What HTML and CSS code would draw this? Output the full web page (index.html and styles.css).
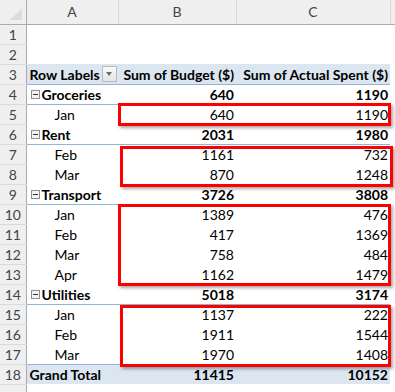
FILE: index.html
```html
<!DOCTYPE html>
<html lang="en">
<head>
<meta charset="UTF-8">
<title>Pivot</title>
<link rel="stylesheet" href="styles.css">
</head>
<body>
<div class="sheet">
  <table class="grid">
    <colgroup>
      <col class="c-hd"><col class="c-a"><col class="c-b"><col class="c-c"><col class="c-d">
    </colgroup>
    <tr class="colhead">
      <th class="corner"><span class="tri"></span></th><th>A</th><th>B</th><th>C</th><th></th>
    </tr>
    <tr><th>1</th><td></td><td></td><td></td><td></td></tr>
    <tr><th>2</th><td></td><td></td><td></td><td></td></tr>
    <tr class="pv-head">
      <th>3</th>
      <td><span class="lbl">Row Labels</span><span class="filter"></span></td>
      <td class="num">Sum of Budget ($)</td>
      <td class="num">Sum of Actual Spent ($)</td><td class="blank"></td>
    </tr>
    <tr class="grp"><th>4</th><td><span class="minus"></span>Groceries</td><td class="num">640</td><td class="num">1190</td><td class="blank"></td></tr>
    <tr class="item"><th>5</th><td class="sub">Jan</td><td class="num">640</td><td class="num">1190</td><td></td></tr>
    <tr class="grp"><th>6</th><td><span class="minus"></span>Rent</td><td class="num">2031</td><td class="num">1980</td><td class="blank"></td></tr>
    <tr class="item"><th>7</th><td class="sub">Feb</td><td class="num">1161</td><td class="num">732</td><td></td></tr>
    <tr class="item"><th>8</th><td class="sub">Mar</td><td class="num">870</td><td class="num">1248</td><td></td></tr>
    <tr class="grp"><th>9</th><td><span class="minus"></span>Transport</td><td class="num">3726</td><td class="num">3808</td><td class="blank"></td></tr>
    <tr class="item"><th>10</th><td class="sub">Jan</td><td class="num">1389</td><td class="num">476</td><td></td></tr>
    <tr class="item"><th>11</th><td class="sub">Feb</td><td class="num">417</td><td class="num">1369</td><td></td></tr>
    <tr class="item"><th>12</th><td class="sub">Mar</td><td class="num">758</td><td class="num">484</td><td></td></tr>
    <tr class="item"><th>13</th><td class="sub">Apr</td><td class="num">1162</td><td class="num">1479</td><td></td></tr>
    <tr class="grp"><th>14</th><td><span class="minus"></span>Utilities</td><td class="num">5018</td><td class="num">3174</td><td class="blank"></td></tr>
    <tr class="item"><th>15</th><td class="sub">Jan</td><td class="num">1137</td><td class="num">222</td><td></td></tr>
    <tr class="item"><th>16</th><td class="sub">Feb</td><td class="num">1911</td><td class="num">1544</td><td></td></tr>
    <tr class="item"><th>17</th><td class="sub">Mar</td><td class="num">1970</td><td class="num">1408</td><td></td></tr>
    <tr class="total"><th>18</th><td>Grand Total</td><td class="num">11415</td><td class="num">10152</td><td class="blank"></td></tr>
    <tr><th></th><td></td><td></td><td></td><td></td></tr>
  </table>

  <!-- highlight boxes drawn over the sheet -->
  <div class="mark m1"></div>
  <div class="mark m2"></div>
  <div class="mark m3"></div>
  <div class="mark m4"></div>
</div>
</body>
</html>
```

FILE: styles.css
```css
body {
    margin: 0;
    background: #fff;
    overflow: hidden;
    font-family: 'Lato', 'Liberation Sans', sans-serif;
    color: #000;
}

.sheet {
    position: relative;
    width: 395px;
    height: 392px;
    overflow: hidden;
}

.grid {
    border-collapse: collapse;
    table-layout: fixed;
    width: 395px;
    font-size: 14px;
}

.c-hd { width: 26px; }
.c-a { width: 92px; }
.c-b { width: 118px; }
.c-c { width: 154px; }
.c-d { width: 5px; }

.grid tr { height: 20px; }

.grid td {
    padding: 0 2px 0 3px;
    white-space: nowrap;
    overflow: hidden;
    vertical-align: bottom;
    line-height: 18px;
}

.grid th {
    background: #efefef;
    color: #444;
    font-weight: normal;
    font-family: 'Lato', sans-serif;
    font-size: 14px;
    border-bottom: 1px solid #dadada;
    border-right: 1px solid #ababab;
    padding: 0;
    text-align: center;
    vertical-align: middle;
}

/* column letters */
.colhead { height: 24px !important; }
.colhead th {
    border-bottom: 1px solid #ababab;
    border-right: 1px solid #d8d8d8;
}
.colhead th.corner {
    position: relative;
    border-right: 1px solid #ababab;
}
.tri {
    position: absolute;
    right: 4px;
    bottom: 4px;
    width: 0;
    height: 0;
    border-left: 12px solid transparent;
    border-bottom: 12px solid #dcdcdc;
}

.num { text-align: right; }

/* pivot header row */
.pv-head td {
    background: #dce6f1;
    font-weight: 700;
    border-bottom: 1px solid #95b3d7;
}
.pv-head td.blank, .grp td.blank, .total td.blank {
    background: #fff;
    border: none;
}
.pv-head td:first-of-type { position: relative; }

.filter {
    position: absolute;
    right: 1px;
    top: 2px;
    width: 13px;
    height: 14px;
    border: 1px solid #b9b9b9;
    background: linear-gradient(#fafafa, #e4e4e4);
}
.filter::after {
    content: "";
    position: absolute;
    left: 3px;
    top: 5px;
    border-left: 3px solid transparent;
    border-right: 3px solid transparent;
    border-top: 4px solid #6b6b6b;
}

/* group rows */
.grp td {
    font-weight: 700;
    border-bottom: 1px solid #95b3d7;
}
.minus {
    display: inline-block;
    position: relative;
    width: 7px;
    height: 7px;
    border: 1px solid #8f8f8f;
    background: #f4f4f4;
    margin: 0 2px 0 1px;
    vertical-align: 1px;
}
.minus::after {
    content: "";
    position: absolute;
    left: 1px;
    top: 3px;
    width: 5px;
    height: 1px;
    background: #333;
}

.item td.sub { padding-left: 28px; }

/* grand total */
.total td {
    background: #dce6f1;
    font-weight: 700;
    border-top: 1px solid #95b3d7;
}

/* red highlight boxes */
.mark {
    position: absolute;
    border: 3px solid #ff0000;
    box-shadow: 2px 2px 3px rgba(0, 0, 0, 0.35);
}
.m1 { left: 118px; top: 103px; width: 267px; height: 17px; }
.m2 { left: 120px; top: 146px; width: 267px; height: 35px; }
.m3 { left: 118px; top: 204px; width: 267px; height: 76px; }
.m4 { left: 120px; top: 305px; width: 265px; height: 56px; }
```
